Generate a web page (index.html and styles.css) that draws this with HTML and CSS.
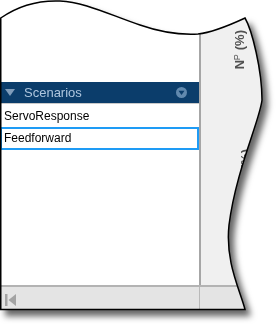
FILE: index.html
```html
<!DOCTYPE html>
<html>
<head>
<meta charset="utf-8">
<link rel="stylesheet" href="styles.css">
</head>
<body>
<div class="frame">
  <div class="sheet">
    <div class="main">
      <div class="left">
        <div class="header">
          <svg class="hdr-tri" width="10" height="8" viewBox="0 0 10 8"><path d="M0 0 H10 L5 7 Z" fill="#7f9cba"/></svg>
          <span class="hdr-title">Scenarios</span>
          <svg class="hdr-menu" width="11" height="11" viewBox="0 0 11 11"><circle cx="5.5" cy="5.5" r="5.5" fill="#6189ae"/><path d="M2.5 3.8 H8.5 L5.5 8 Z" fill="#0b3d6b"/></svg>
        </div>
        <div class="list">
          <div class="item">ServoResponse</div>
          <div class="item selected">Feedforward</div>
        </div>
      </div>
      <div class="divider"></div>
      <div class="right">
        <div class="ylabel"><b>N</b><sub>P</sub> <b>(%)</b></div>
        <div class="ylabel second"><b>N</b><sub>S</sub> <b>(%)</b></div>
      </div>
    </div>
    <div class="bottom">
      <div class="bleft">
        <svg class="first-icon" width="11" height="12" viewBox="0 0 11 12"><rect x="0" y="0" width="2.5" height="12" fill="#a3a3a3"/><path d="M11 0 V12 L3.5 6 Z" fill="#a3a3a3"/></svg>
      </div>
      <div class="bright"></div>
    </div>
  </div>
  <svg class="outline" width="279" height="326" viewBox="0 0 279 326">
    <path d="M0.75 18 C15 8 35 0 60 1 C85 2 110 15 140 25 C160 32 180 35 198 34 C215 32 232 24 245 18 C252 30 262 70 262 100 C260 120 236 170 229 225 C225 262 240 290 245 309.5 L0.75 309.5 Z" fill="none" stroke="#000" stroke-width="1.5"/>
  </svg>
</div>
</body>
</html>
```
FILE: styles.css
```css
html, body {
  margin: 0;
  padding: 0;
  background: #fff;
}
body {
  width: 279px;
  height: 326px;
  overflow: hidden;
  font-family: "Liberation Sans", Arial, sans-serif;
}
.frame {
  position: relative;
  width: 279px;
  height: 326px;
  filter: drop-shadow(5px 6px 3px rgba(0, 0, 0, 0.6));
}
.sheet {
  width: 264px;
  height: 311px;
  display: flex;
  flex-direction: column;
  background: #fff;
  clip-path: path('M0 18 C15 8 35 0 60 1 C85 2 110 15 140 25 C160 32 180 35 198 34 C215 32 232 24 245 18 C252 30 262 70 262 100 C260 120 236 170 229 225 C225 262 240 290 245 310 L0 310 Z');
}
.main {
  display: flex;
  height: 285px;
}
.left {
  width: 199px;
  padding-top: 82px;
  background: #fff;
}
.header {
  height: 21px;
  background: #0b3d6b;
  display: flex;
  align-items: center;
  padding-left: 5px;
  padding-right: 12px;
}
.hdr-tri {
  display: block;
  margin-top: 1px;
}
.hdr-title {
  margin-left: 9px;
  font-size: 13px;
  color: #aec6de;
  flex: 1;
}
.hdr-menu {
  display: block;
}
.list {
  border-top: 1px solid #c9c9c9;
  padding-top: 1px;
}
.item {
  height: 22px;
  line-height: 22px;
  font-size: 12px;
  color: #000;
  padding-left: 4px;
}
.item.selected {
  height: 19px;
  line-height: 19px;
  border: 2px solid #1e9bf5;
  padding-left: 2px;
}
.divider {
  width: 2px;
  background: #a6a6a6;
}
.right {
  flex: 1;
  background: #f0f0f0;
  display: flex;
  flex-direction: column;
  align-items: flex-start;
  padding-left: 32px;
  padding-top: 30px;
}
.ylabel {
  writing-mode: vertical-rl;
  transform: rotate(180deg);
  font-size: 13px;
  color: #505050;
  white-space: nowrap;
  line-height: 13px;
}
.ylabel b {
  font-weight: bold;
}
.ylabel sub {
  font-size: 9px;
  vertical-align: baseline;
  position: relative;
  left: 3px;
}
.ylabel.second {
  margin-top: 80px;
  margin-left: 6px;
}
.bottom {
  height: 24px;
  display: flex;
  border-top: 2px solid #b3b3b3;
  background: #e4e4e4;
}
.bleft {
  width: 200px;
  border-right: 1px solid #b9b9b9;
  display: flex;
  align-items: center;
  padding-left: 5px;
  box-sizing: border-box;
}
.first-icon {
  display: block;
  margin-top: 1px;
}
.bright {
  flex: 1;
}
.outline {
  position: absolute;
  left: 0;
  top: 0;
}
```
